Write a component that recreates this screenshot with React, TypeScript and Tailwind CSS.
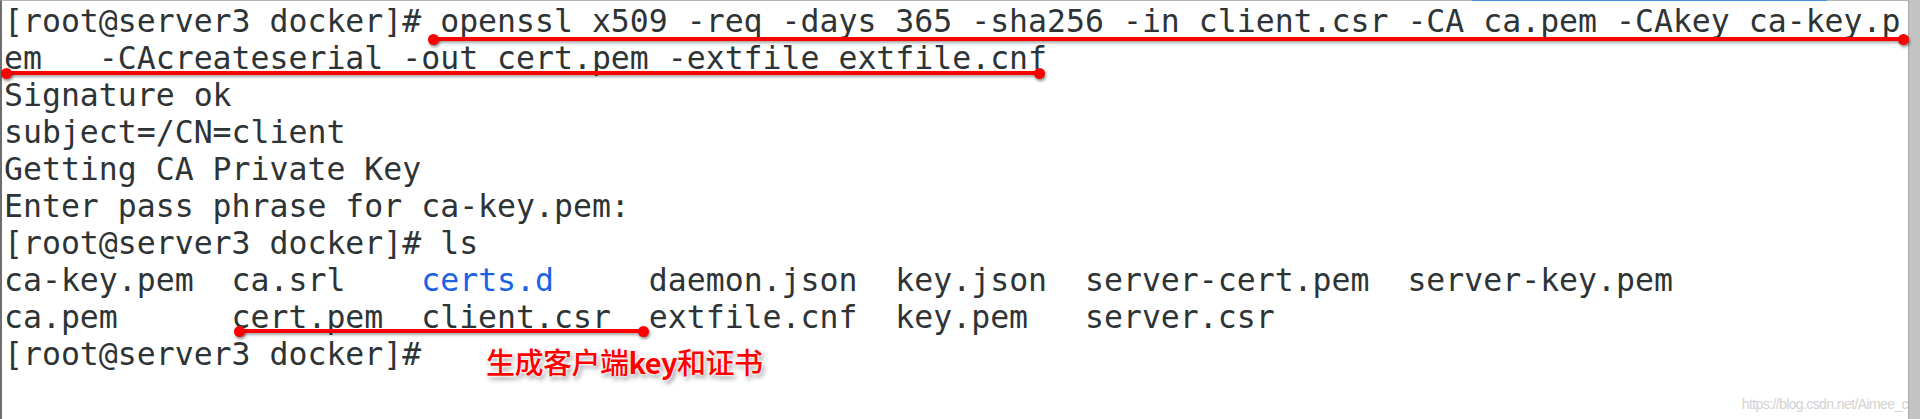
import React from "react";

const lines: { text: React.ReactNode }[] = [
  { text: "[root@server3 docker]# openssl x509 -req -days 365 -sha256 -in client.csr -CA ca.pem -CAkey ca-key.p" },
  { text: "em   -CAcreateserial -out cert.pem -extfile extfile.cnf" },
  { text: "Signature ok" },
  { text: "subject=/CN=client" },
  { text: "Getting CA Private Key" },
  { text: "Enter pass phrase for ca-key.pem:" },
  { text: "[root@server3 docker]# ls" },
  {
    text: (
      <>
        {"ca-key.pem  ca.srl    "}
        <span className="text-[#1b62e4]">certs.d</span>
        {"     daemon.json  key.json  server-cert.pem  server-key.pem"}
      </>
    ),
  },
  { text: "ca.pem      cert.pem  client.csr  extfile.cnf  key.pem   server.csr" },
  { text: "[root@server3 docker]# " },
];

function Dot({ cls }: { cls: string }) {
  return (
    <div
      className={`absolute h-[11px] w-[11px] rounded-full bg-[#ff0000] shadow-[1px_2px_3px_rgba(0,0,0,0.45)] ${cls}`}
    />
  );
}

export default function App() {
  return (
    <div className="relative flex h-[419px] w-[1920px] overflow-hidden bg-white">
      {/* terminal text area */}
      <div className="relative flex-1 border-l-2 border-t border-l-[#6e6e6e] border-t-[#b4b4b4] bg-white">
        <div
          className="pl-[2px] pt-[2px] text-[31.5px] leading-[37px] text-[#2e3436] whitespace-pre"
          style={{ fontFamily: '"DejaVu Sans Mono", "Liberation Mono", monospace' }}
        >
          {lines.map((l, i) => (
            <div key={i}>{l.text}</div>
          ))}
        </div>
        {/* watermark */}
        <div
          className="absolute bottom-[6px] right-[0px] text-[14px] leading-[18px] tracking-[-0.6px] text-[#d2d2d2] whitespace-nowrap"
          style={{ fontFamily: '"Liberation Sans", Arial, sans-serif' }}
        >
          https://blog.csdn.net/Aimee_c
        </div>
      </div>

      {/* scrollbar */}
      <div className="w-[12px] border-l border-[#a9a9a9] bg-[#c3c3c3]" />

      {/* blue selection mark on top edge */}
      <div className="absolute left-[1472px] top-0 h-[1px] w-[355px] bg-[#4a90d9]" />

      {/* red underline 1 */}
      <div className="absolute left-[433px] top-[37px] h-[4px] w-[1470px] bg-[#ff0000] shadow-[0_2px_3px_rgba(0,0,0,0.35)]" />
      <Dot cls="left-[428px] top-[34px]" />
      <Dot cls="left-[1898px] top-[34px]" />

      {/* red underline 2 */}
      <div className="absolute left-[6px] top-[71px] h-[4px] w-[1033px] bg-[#ff0000] shadow-[0_2px_3px_rgba(0,0,0,0.35)]" />
      <Dot cls="left-[1px] top-[68px]" />
      <Dot cls="left-[1034px] top-[68px]" />

      {/* red underline 3 */}
      <div className="absolute left-[239px] top-[329px] h-[4px] w-[404px] bg-[#ff0000] shadow-[0_2px_3px_rgba(0,0,0,0.35)]" />
      <Dot cls="left-[234px] top-[326px]" />
      <Dot cls="left-[638px] top-[326px]" />

      {/* annotation */}
      <div
        className="absolute left-[486px] top-[342px] text-[29px] leading-[38px] tracking-[-0.5px] text-[#ff0000] font-medium [text-shadow:0_0_2px_#fff,0_0_3px_#fff,0_0_4px_#fff,2px_3px_5px_rgba(0,0,0,0.5)]"
        style={{ fontFamily: '"Noto Sans CJK SC", "Noto Sans", sans-serif' }}
      >
        生成客户端<span className="font-bold">key</span>和证书
      </div>
    </div>
  );
}
